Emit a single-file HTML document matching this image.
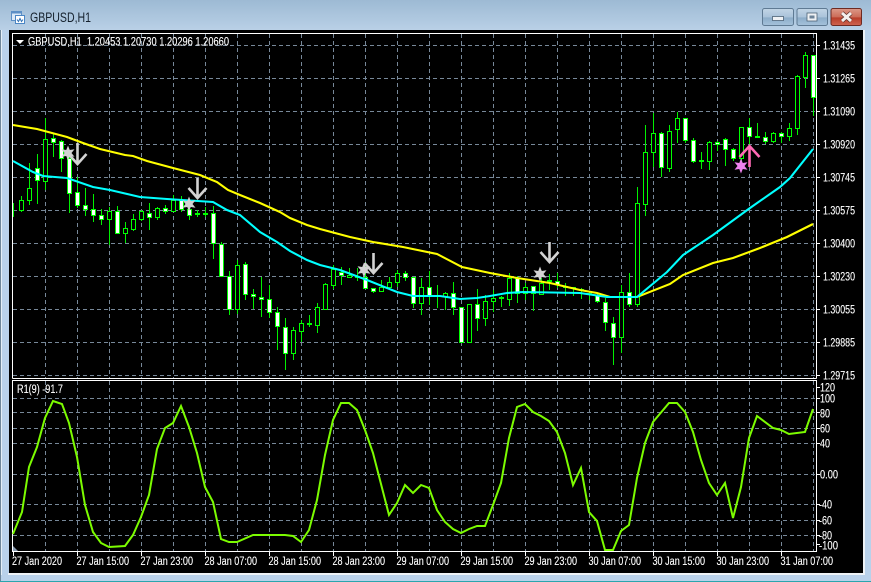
<!DOCTYPE html>
<html><head><meta charset="utf-8"><title>GBPUSD,H1</title>
<style>
html,body{margin:0;padding:0;width:871px;height:582px;overflow:hidden;background:#b9d1ea}
svg{display:block;position:absolute;left:0;top:0}
text{font-family:"Liberation Sans",sans-serif;font-size:11.5px;fill:#fff;stroke:#fff;stroke-width:.12}
</style></head><body>
<svg width="871" height="582" viewBox="0 0 871 582" xmlns="http://www.w3.org/2000/svg">
<defs>
<linearGradient id="tb" x1="0" y1="0" x2="0" y2="1"><stop offset="0" stop-color="#9dbad4"/><stop offset="1" stop-color="#b9d0e6"/></linearGradient>
<linearGradient id="bn" x1="0" y1="0" x2="0" y2="1"><stop offset="0" stop-color="#c2d5e6"/><stop offset=".5" stop-color="#aac3da"/><stop offset=".55" stop-color="#8dadc9"/><stop offset="1" stop-color="#a5c2db"/></linearGradient>
<linearGradient id="cl" x1="0" y1="0" x2="0" y2="1"><stop offset="0" stop-color="#dc9a8a"/><stop offset=".5" stop-color="#cc6c58"/><stop offset=".55" stop-color="#b83e2a"/><stop offset="1" stop-color="#cf6450"/></linearGradient>
</defs>
<rect width="871" height="582" fill="#b9d1ea"/>
<rect width="871" height="30" fill="url(#tb)"/>
<rect x="0" y="30" width="1" height="552" fill="#6f8699"/>
<rect x="1" y="30" width="1" height="545" fill="#e4eef6"/>
<rect y="581" width="871" height="1" fill="#2aa5ad"/>
<rect y="573" x="8" width="857" height="2" fill="#eef2f6"/>
<rect x="863" y="30" width="2" height="545" fill="#eef2f6"/>
<rect x="9" y="30" width="854" height="543" fill="#000"/>

<!-- title icon -->
<g fill="none" stroke-width="1">
<rect x="11.5" y="11.5" width="10" height="9" fill="#dbe9f7" stroke="#5c8fc6"/>
<rect x="11.5" y="11.5" width="10" height="2" fill="#5c8fc6" stroke="none"/>
<rect x="15.5" y="15.5" width="9" height="8" fill="#fff" stroke="#4b86c4"/>
<path d="M17 19.5l1.5 2 1.5-3 1.5 3 1.5-2" stroke="#2c6fb5"/>
</g>
<text x="30" y="22" style="font-size:13.5px;fill:#14202c;stroke:none" textLength="61" lengthAdjust="spacingAndGlyphs">GBPUSD,H1</text>

<!-- buttons -->
<rect x="762.5" y="8.5" width="31" height="17" rx="2" fill="url(#bn)" stroke="#5f7a93"/>
<rect x="772.5" y="16.5" width="11" height="4" fill="#eef1f4" stroke="#4d6276" stroke-width=".8"/>
<rect x="797" y="8.5" width="30.5" height="17" rx="2" fill="url(#bn)" stroke="#5f7a93"/>
<rect x="807" y="13" width="10" height="8" fill="#eef1f4" stroke="#4d6276" stroke-width=".8"/>
<rect x="809.5" y="15.5" width="5" height="3" fill="#6d8398"/>
<rect x="831" y="8.5" width="30.5" height="17" rx="2" fill="url(#cl)" stroke="#6d2a22"/>
<path d="M842 13l9 8M851 13l-9 8" stroke="#5a2f2a" stroke-width="4.4"/>
<path d="M842 13l9 8M851 13l-9 8" stroke="#f4f1ef" stroke-width="3"/>

<!-- grid main + sub -->
<g stroke="#778899" stroke-width="1" stroke-dasharray="4 3" shape-rendering="crispEdges" fill="none">
<path d="M13 45.5H816M13 78.5H816M13 111.5H816M13 144.5H816M13 177.5H816M13 210.5H816M13 243.5H816M13 276.5H816M13 309.5H816M13 342.5H816M13 375.5H816"/>
<path d="M45.5 34V378M77.5 34V378M109.5 34V378M141.5 34V378M173.5 34V378M205.5 34V378M237.5 34V378M269.5 34V378M301.5 34V378M333.5 34V378M365.5 34V378M397.5 34V378M429.5 34V378M461.5 34V378M493.5 34V378M525.5 34V378M557.5 34V378M589.5 34V378M621.5 34V378M653.5 34V378M685.5 34V378M717.5 34V378M749.5 34V378M781.5 34V378M813.5 34V378"/>
<path d="M13 398.5H816M13 412.5H816M13 428.5H816M13 443.5H816M13 474.5H816M13 504.5H816M13 520.5H816M13 535.5H816"/>
<path d="M45.5 381V551M77.5 381V551M109.5 381V551M141.5 381V551M173.5 381V551M205.5 381V551M237.5 381V551M269.5 381V551M301.5 381V551M333.5 381V551M365.5 381V551M397.5 381V551M429.5 381V551M461.5 381V551M493.5 381V551M525.5 381V551M557.5 381V551M589.5 381V551M621.5 381V551M653.5 381V551M685.5 381V551M717.5 381V551M749.5 381V551M781.5 381V551M813.5 381V551"/>
</g>

<!-- frames -->
<g fill="none" stroke="#fff" stroke-width="1" shape-rendering="crispEdges">
<path d="M12.5 378.5V33.5H816.5V378.5"/>
<path d="M12.5 378.5H816.5"/>
<path d="M12.5 380.5H816.5V551.5H12.5Z"/>
<path d="M816 45.5h4M816 78.5h4M816 111.5h4M816 144.5h4M816 177.5h4M816 210.5h4M816 243.5h4M816 276.5h4M816 309.5h4M816 342.5h4M816 375.5h4"/>
<path d="M816 387.5h4M816 398.5h4M816 412.5h4M816 428.5h4M816 443.5h4M816 474.5h4M816 504.5h4M816 520.5h4M816 535.5h4M816 544.5h4"/>
<path d="M13.5 552v4M77.5 552v4M141.5 552v4M205.5 552v4M269.5 552v4M333.5 552v4M397.5 552v4M461.5 552v4M525.5 552v4M589.5 552v4M653.5 552v4M717.5 552v4M781.5 552v4"/>
</g>
<path d="M13 546L18 551H13Z" fill="#8a9bb0"/>

<!-- wicks -->
<path shape-rendering="crispEdges" fill="none" stroke="#00f000" stroke-width="1" d="M13.5 203V217M21.5 196V212M29.5 163V205M37.5 154V204M45.5 118V190M53.5 133V157M61.5 140V172M69.5 150V213M77.5 177V208M85.5 188V216M93.5 194V222M101.5 209V225M109.5 207V245M117.5 206V233M125.5 222V243M133.5 214V231M141.5 210V221M149.5 203V230M157.5 207V220M165.5 205V214M173.5 195V211M181.5 196V212M189.5 200V220M197.5 210V217M205.5 207V217M213.5 206V259M221.5 242V276M229.5 271V315M237.5 260V314M245.5 262V300M253.5 289V309M261.5 277V317M269.5 285V318M277.5 307V350M285.5 318V370M293.5 327V360M301.5 320V342M309.5 315V327M317.5 303V333M325.5 283V309M333.5 265V289M341.5 267V285M349.5 268V277M357.5 268V281M365.5 262V288M373.5 288V293M381.5 280V291M389.5 277V287M397.5 270V287M405.5 271V281M413.5 277V308M421.5 278V315M429.5 271V305M437.5 285V308M445.5 292V310M453.5 282V315M461.5 307V342M469.5 304V342M477.5 289V331M485.5 295V326M493.5 290V312M501.5 296V307M509.5 273V306M517.5 276V303M525.5 283V300M533.5 286V311M541.5 278V294M549.5 274V290M557.5 273V288M565.5 283V296M573.5 287V296M581.5 288V299M589.5 292V300M597.5 293V303M605.5 298V331M613.5 317V365M621.5 285V353M629.5 273V307M637.5 187V307M645.5 125V216M653.5 113V167M661.5 132V177M669.5 125V172M677.5 112V143M685.5 118V143M693.5 138V163M701.5 152V169M709.5 141V170M717.5 141V151M725.5 138V166M733.5 148V161M741.5 127V168M749.5 118V167M757.5 123V137M765.5 132V144M773.5 132V143M781.5 132V143M789.5 123V141M797.5 75V135M805.5 52V88M813.5 55V116"/>
<path shape-rendering="crispEdges" fill="none" stroke="#00ff00" stroke-width="2" d="M195 214h5M203 214h5M307 324h5M355 277h5M435 296h5M499 298h5M547 281h5M563 287h5M571 288h5M579 290h5M587 294h5M699 161h5M755 137h5"/>
<!-- hollow bodies -->
<path shape-rendering="crispEdges" fill="#000" stroke="#00ff00" stroke-width="1" d="M19.5 200.5h4V210.5h-4zM27.5 188.5h4V200.5h-4zM43.5 139.5h4V181.5h-4zM107.5 211.5h4V219.5h-4zM123.5 228.5h4V233.5h-4zM131.5 219.5h4V229.5h-4zM139.5 211.5h4V219.5h-4zM155.5 208.5h4V217.5h-4zM171.5 200.5h4V211.5h-4zM235.5 265.5h4V309.5h-4zM291.5 330.5h4V353.5h-4zM299.5 323.5h4V331.5h-4zM315.5 307.5h4V325.5h-4zM323.5 284.5h4V309.5h-4zM331.5 269.5h4V285.5h-4zM347.5 275.5h4V277.5h-4zM379.5 287.5h4V291.5h-4zM387.5 282.5h4V287.5h-4zM395.5 273.5h4V282.5h-4zM419.5 287.5h4V303.5h-4zM443.5 293.5h4V296.5h-4zM467.5 304.5h4V342.5h-4zM483.5 301.5h4V318.5h-4zM491.5 298.5h4V301.5h-4zM507.5 278.5h4V299.5h-4zM523.5 287.5h4V293.5h-4zM539.5 283.5h4V294.5h-4zM619.5 292.5h4V337.5h-4zM635.5 203.5h4V304.5h-4zM643.5 152.5h4V204.5h-4zM651.5 133.5h4V152.5h-4zM667.5 131.5h4V168.5h-4zM675.5 118.5h4V129.5h-4zM707.5 142.5h4V161.5h-4zM739.5 127.5h4V158.5h-4zM771.5 133.5h4V141.5h-4zM787.5 128.5h4V136.5h-4zM795.5 76.5h4V128.5h-4zM803.5 55.5h4V77.5h-4z"/>
<!-- white bodies -->
<path shape-rendering="crispEdges" fill="#fff" stroke="#00ff00" stroke-width="1" d="M35.5 168.5h4V180.5h-4zM51.5 138.5h4V142.5h-4zM59.5 141.5h4V158.5h-4zM67.5 158.5h4V193.5h-4zM75.5 192.5h4V205.5h-4zM83.5 205.5h4V209.5h-4zM91.5 209.5h4V215.5h-4zM99.5 215.5h4V219.5h-4zM115.5 211.5h4V233.5h-4zM147.5 213.5h4V217.5h-4zM163.5 208.5h4V211.5h-4zM179.5 200.5h4V209.5h-4zM187.5 209.5h4V215.5h-4zM211.5 213.5h4V243.5h-4zM219.5 244.5h4V276.5h-4zM227.5 276.5h4V309.5h-4zM243.5 264.5h4V294.5h-4zM251.5 294.5h4V296.5h-4zM259.5 297.5h4V299.5h-4zM267.5 299.5h4V312.5h-4zM275.5 312.5h4V326.5h-4zM283.5 327.5h4V353.5h-4zM339.5 272.5h4V275.5h-4zM363.5 277.5h4V288.5h-4zM371.5 288.5h4V291.5h-4zM403.5 273.5h4V277.5h-4zM411.5 277.5h4V303.5h-4zM427.5 287.5h4V296.5h-4zM451.5 293.5h4V307.5h-4zM459.5 307.5h4V342.5h-4zM475.5 304.5h4V318.5h-4zM515.5 278.5h4V293.5h-4zM531.5 286.5h4V293.5h-4zM555.5 281.5h4V284.5h-4zM595.5 295.5h4V301.5h-4zM603.5 302.5h4V322.5h-4zM611.5 323.5h4V337.5h-4zM627.5 292.5h4V304.5h-4zM659.5 133.5h4V167.5h-4zM683.5 118.5h4V140.5h-4zM691.5 140.5h4V161.5h-4zM715.5 142.5h4V144.5h-4zM723.5 139.5h4V149.5h-4zM731.5 149.5h4V158.5h-4zM747.5 127.5h4V136.5h-4zM763.5 137.5h4V141.5h-4zM779.5 133.5h4V136.5h-4zM811.5 55.5h4V97.5h-4z"/>

<!-- moving averages -->
<polyline fill="none" stroke="#ffff00" stroke-width="2.1" points="13,125 37,129 67,137 83,143 100,149 125,155 133,156 147,161 173,168 200,175 217,182 228,190 240,195 260,203 280,212 290,218 307,225 320,229 350,237 373,242 403,247 437,254 462,267 490,273 517,278 550,283 580,290 597,293 610,297 637,297 670,284 683,275 713,263 733,258 760,248 787,237 813,224"/>
<polyline fill="none" stroke="#00ffff" stroke-width="2.1" points="13,161 33,172 43,176 67,178 93,187 110,190 140,197 167,199 213,202 227,210 240,215 260,232 277,242 290,251 307,260 320,265 340,270 367,280 397,292 413,296 440,296 460,299 477,298 490,296 507,293 523,292 580,293 607,297 637,297 667,272 683,255 713,235 750,208 780,187 790,178 813,149"/>

<!-- grey markers -->
<g fill="#d3d3d3">
<polygon transform="translate(68,153)" points="0,-7.5 1.75,-3 6.5,-3.75 3.5,0 6.5,3.75 1.75,3 0,7.5 -1.75,3 -6.5,3.75 -3.5,0 -6.5,-3.75 -1.75,-3"/>
<polygon transform="translate(189,204)" points="0,-7.5 1.75,-3 6.5,-3.75 3.5,0 6.5,3.75 1.75,3 0,7.5 -1.75,3 -6.5,3.75 -3.5,0 -6.5,-3.75 -1.75,-3"/>
<polygon transform="translate(364,270)" points="0,-7.5 1.75,-3 6.5,-3.75 3.5,0 6.5,3.75 1.75,3 0,7.5 -1.75,3 -6.5,3.75 -3.5,0 -6.5,-3.75 -1.75,-3"/>
<polygon transform="translate(540,274)" points="0,-7.5 1.75,-3 6.5,-3.75 3.5,0 6.5,3.75 1.75,3 0,7.5 -1.75,3 -6.5,3.75 -3.5,0 -6.5,-3.75 -1.75,-3"/>
</g>
<g fill="none" stroke="#d3d3d3" stroke-width="2.6">
<path d="M77.5 143V164M68.5 154L77.5 164L86.5 154"/>
<path d="M197.5 178V198M188.5 188L197.5 198L206.5 188"/>
<path d="M373.5 253V273M364.5 263L373.5 273L382.5 263"/>
<path d="M549.5 242V262M540.5 252L549.5 262L558.5 252"/>
</g>
<polygon transform="translate(741,166)" fill="#ee82ee" points="0,-7.5 1.75,-3 6.5,-3.75 3.5,0 6.5,3.75 1.75,3 0,7.5 -1.75,3 -6.5,3.75 -3.5,0 -6.5,-3.75 -1.75,-3"/>
<path d="M749.5 146V167M739.5 157L749.5 146L759.5 157" fill="none" stroke="#ff69b4" stroke-width="2.6"/>

<!-- R1 line -->
<polyline fill="none" stroke="#7cfc00" stroke-width="2" points="13,534 22,512 29,467 37,447 45,418 53,401 62,404 69,423 77,457 85,505 93,532 101,543 109,547 125,546 133,535 141,517 149,495 157,449 165,428 173,423 181,406 189,427 197,453 205,487 213,502 221,539 229,542 237,542 253,535 285,535 293,536 301,542 309,530 317,500 325,455 333,420 341,403 349,403 357,410 365,430 373,453 389,515 397,503 405,485 413,493 421,485 429,488 437,510 445,522 453,529 461,533 469,529 477,526 485,526 493,505 501,483 509,438 517,407 525,404 533,412 541,416 549,421 557,432 565,453 573,485 581,468 589,512 597,521 605,550 613,550 621,531 629,525 637,478 645,443 653,422 669,403 677,403 685,412 693,432 701,460 709,483 717,495 725,483 733,518 741,487 749,438 757,416 773,428 781,430 789,434 805,432 813,409"/>

<!-- labels -->
<path d="M16 40h8l-4 4z" fill="#fff"/>
<text x="28" y="45.5" textLength="201" lengthAdjust="spacingAndGlyphs" xml:space="preserve">GBPUSD,H1  1.20453 1.20730 1.20296 1.20660</text>
<text x="17" y="393" textLength="46" lengthAdjust="spacingAndGlyphs">R1(9) -91.7</text>

<text x="823" y="49.5" textLength="32" lengthAdjust="spacingAndGlyphs">1.31435</text>
<text x="823" y="82.5" textLength="32" lengthAdjust="spacingAndGlyphs">1.31265</text>
<text x="823" y="115.5" textLength="32" lengthAdjust="spacingAndGlyphs">1.31090</text>
<text x="823" y="148.5" textLength="32" lengthAdjust="spacingAndGlyphs">1.30920</text>
<text x="823" y="181.5" textLength="32" lengthAdjust="spacingAndGlyphs">1.30745</text>
<text x="823" y="214.5" textLength="32" lengthAdjust="spacingAndGlyphs">1.30575</text>
<text x="823" y="247.5" textLength="32" lengthAdjust="spacingAndGlyphs">1.30400</text>
<text x="823" y="280.5" textLength="32" lengthAdjust="spacingAndGlyphs">1.30230</text>
<text x="823" y="313.5" textLength="32" lengthAdjust="spacingAndGlyphs">1.30055</text>
<text x="823" y="346.5" textLength="32" lengthAdjust="spacingAndGlyphs">1.29885</text>
<text x="823" y="379.5" textLength="32" lengthAdjust="spacingAndGlyphs">1.29715</text>

<text x="820" y="391.5" textLength="15" lengthAdjust="spacingAndGlyphs">120</text>
<text x="820" y="402.5" textLength="15" lengthAdjust="spacingAndGlyphs">100</text>
<text x="820" y="417.5" textLength="10" lengthAdjust="spacingAndGlyphs">80</text>
<text x="820" y="432.5" textLength="10" lengthAdjust="spacingAndGlyphs">60</text>
<text x="820" y="447.5" textLength="10" lengthAdjust="spacingAndGlyphs">40</text>
<text x="820" y="478.5" textLength="18" lengthAdjust="spacingAndGlyphs">0.00</text>
<text x="819" y="508.5" textLength="13" lengthAdjust="spacingAndGlyphs">-40</text>
<text x="819" y="524.5" textLength="13" lengthAdjust="spacingAndGlyphs">-60</text>
<text x="819" y="539.5" textLength="13" lengthAdjust="spacingAndGlyphs">-80</text>
<text x="819" y="549.5" textLength="19" lengthAdjust="spacingAndGlyphs">-100</text>

<text x="12" y="565" textLength="50" lengthAdjust="spacingAndGlyphs">27 Jan 2020</text>
<text x="76.5" y="565" textLength="52.5" lengthAdjust="spacingAndGlyphs">27 Jan 15:00</text>
<text x="140.5" y="565" textLength="52.5" lengthAdjust="spacingAndGlyphs">27 Jan 23:00</text>
<text x="204.5" y="565" textLength="52.5" lengthAdjust="spacingAndGlyphs">28 Jan 07:00</text>
<text x="268.5" y="565" textLength="52.5" lengthAdjust="spacingAndGlyphs">28 Jan 15:00</text>
<text x="332.5" y="565" textLength="52.5" lengthAdjust="spacingAndGlyphs">28 Jan 23:00</text>
<text x="396.5" y="565" textLength="52.5" lengthAdjust="spacingAndGlyphs">29 Jan 07:00</text>
<text x="460.5" y="565" textLength="52.5" lengthAdjust="spacingAndGlyphs">29 Jan 15:00</text>
<text x="524.5" y="565" textLength="52.5" lengthAdjust="spacingAndGlyphs">29 Jan 23:00</text>
<text x="588.5" y="565" textLength="52.5" lengthAdjust="spacingAndGlyphs">30 Jan 07:00</text>
<text x="652.5" y="565" textLength="52.5" lengthAdjust="spacingAndGlyphs">30 Jan 15:00</text>
<text x="716.5" y="565" textLength="52.5" lengthAdjust="spacingAndGlyphs">30 Jan 23:00</text>
<text x="780.5" y="565" textLength="52.5" lengthAdjust="spacingAndGlyphs">31 Jan 07:00</text>
</svg>
</body></html>
